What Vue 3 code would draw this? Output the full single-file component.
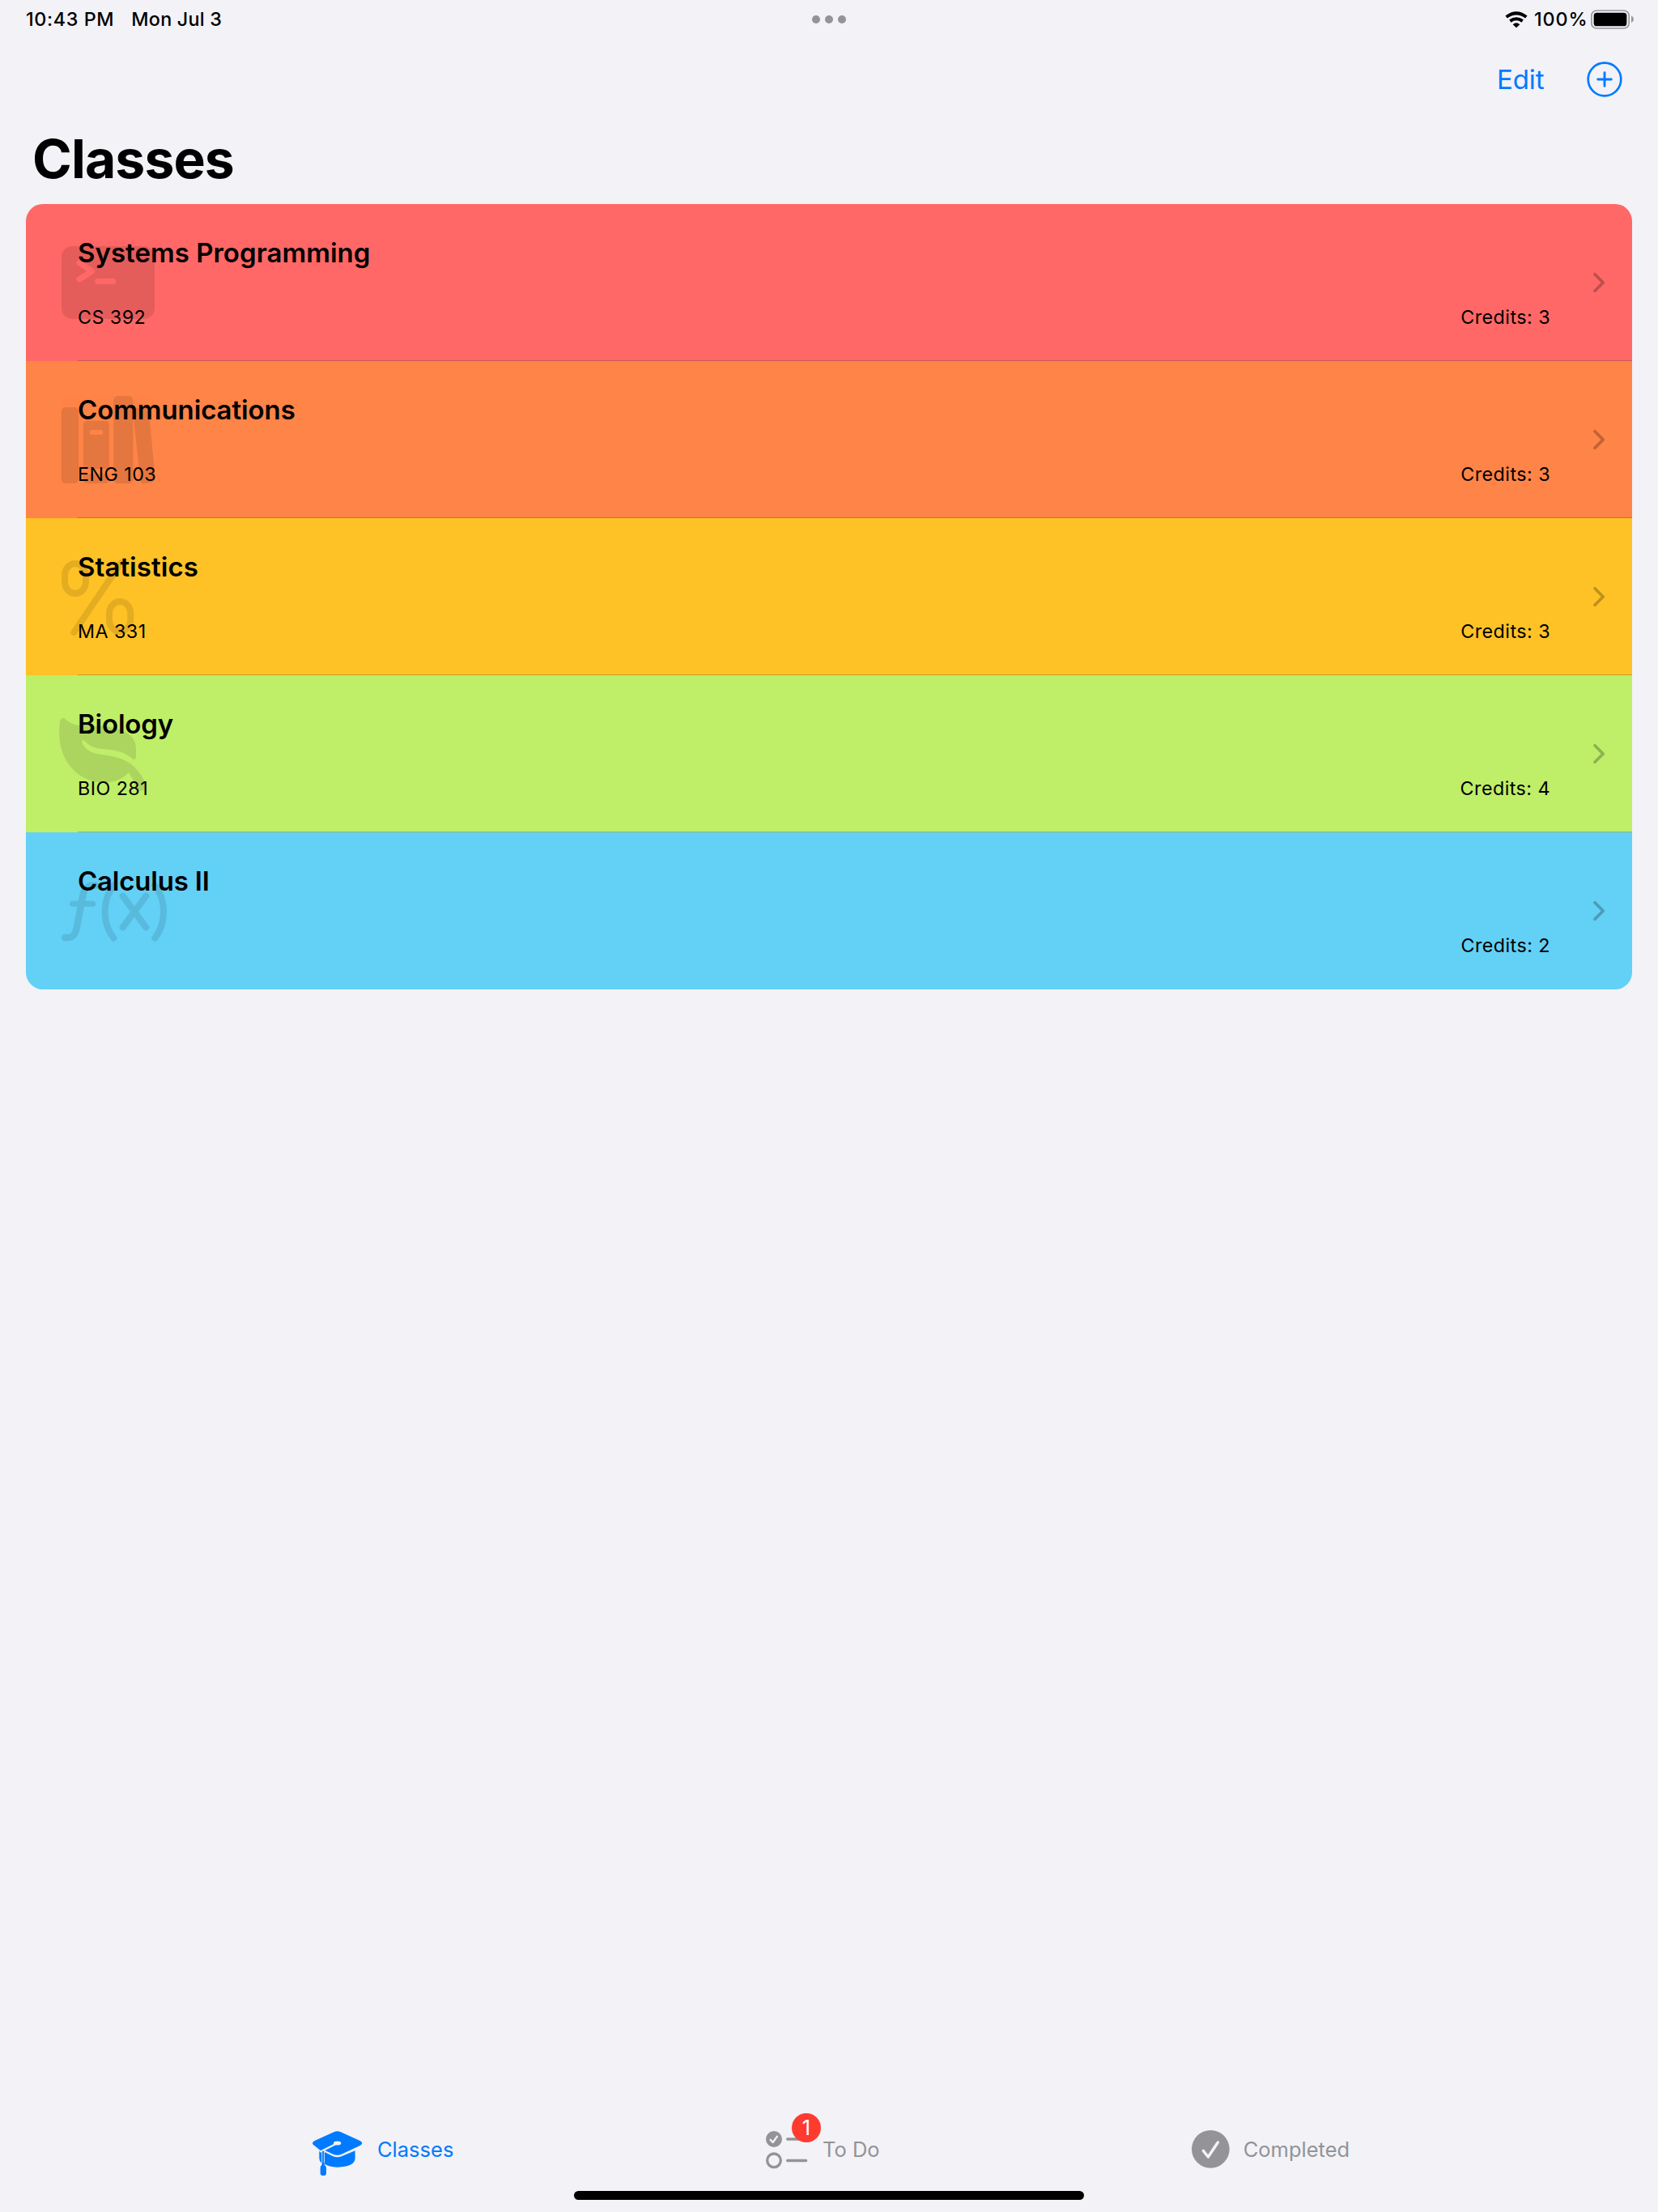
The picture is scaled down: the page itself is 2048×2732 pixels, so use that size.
<script setup>
const classes = [
  { name: 'Systems Programming', code: 'CS 392', credits: 3, color: '#ff6866', icon: 'terminal', box: '36 36 600 582', ls: '0.020px' },
  { name: 'Communications', code: 'ENG 103', credits: 3, color: '#ff8447', icon: 'books', box: '36 18 600 582', ls: '-0.1px' },
  { name: 'Statistics', code: 'MA 331', credits: 3, color: '#ffc226', icon: 'percent', box: '36 0 600 582', ls: '0.060px' },
  { name: 'Biology', code: 'BIO 281', credits: 4, color: '#bfee69', icon: 'leaf', box: '36 12 600 582', ls: '-0.2px' },
  { name: 'Calculus II', code: '', credits: 2, color: '#63d0f6', icon: 'function', box: '36 24 600 582', ls: '-0.2px' }
]
</script>

<template>
  <div class="screen">
    <header class="status">
      <span class="time">10:43 PM</span>
      <span class="date">Mon Jul 3</span>
      <div class="dots"><i></i><i></i><i></i></div>
      <svg class="wifi" viewBox="333 38 84 66">
        <g fill="none" stroke="#000" stroke-width="12">
          <path d="M338 62Q375 34 412 62" />
          <path d="M352 77Q375 61 398 77" />
        </g>
        <path d="M362 90Q375 78 388 90L375 102Z" />
      </svg>
      <span class="percent">100%</span>
      <svg class="battery" viewBox="651 36 162 72">
        <rect x="653.5" y="39" width="139" height="66" rx="19" fill="none" stroke="#98979b" stroke-width="5" />
        <rect x="662" y="47" width="122" height="50" rx="11" />
        <path d="M801 58Q810 63 810 71.500Q810 80 801 85Z" fill="#98979b" />
      </svg>
    </header>

    <nav class="nav">
      <span class="edit">Edit</span>
      <svg class="add" viewBox="0 0 44 44" fill="none" stroke="#007aff" stroke-linecap="round">
        <circle cx="22" cy="22" r="20.300" stroke-width="2.700" />
        <path d="M22 13.700V30.300M13.700 22H30.300" stroke-width="2.900" />
      </svg>
    </nav>

    <h1>Classes</h1>

    <main class="list">
      <section v-for="c in classes" :key="c.name" class="row" :style="{ background: c.color }">
        <svg class="glyph" :viewBox="c.box">
          <template v-if="c.icon === 'terminal'">
            <rect x="168" y="192" width="345" height="270" rx="40" opacity=".1" />
            <path d="M234 254L281 285L234 315M302 322.500H359" fill="none" :stroke="c.color" stroke-width="21" stroke-linecap="round" stroke-linejoin="round" />
          </template>
          <g v-else-if="c.icon === 'books'" opacity=".1">
            <rect x="168" y="189" width="63" height="282" rx="15" />
            <path fill-rule="evenodd" d="M264 239H329Q344 239 344 254V418H249V254Q249 239 264 239ZM281 273A9 9 0 0 0 281 291H313A9 9 0 0 0 313 273Z" />
            <path d="M249 436H344V456Q344 471 329 471H264Q249 471 249 456Z" />
            <rect x="361" y="148" width="72" height="323" rx="15" />
            <path d="M433 206Q433 194 445 192L474 188Q489 187 491 202L515 449Q516 464 502 467L475 472Q462 474 460 460Z" />
          </g>
          <g v-else-if="c.icon === 'percent'" opacity=".1" fill="none" stroke="#000" stroke-width="24" stroke-linecap="round">
            <rect x="180" y="168" width="78" height="111" rx="39" ry="43" />
            <rect x="345" y="309" width="79" height="111" rx="39" ry="43" />
            <path d="M214 423L388 166" />
          </g>
          <g v-else-if="c.icon === 'leaf'" opacity=".1">
            <path d="M162 187C163 171 174 167 184 176C210 199 240 200 300 200C385 200 444 228 444 285V314C443 325 436 327 429 320C400 296 375 289 335 287C290 284 272 276 254 256C247 249 242 255 244 262C257 293 284 302 322 307C370 313 404 322 436 350C452 365 465 383 474 402V436C462 444 450 441 444 429C437 411 428 385 416 373C395 396 365 410 325 410C222 408 151 320 160 205Z" />
          </g>
          <g v-else opacity=".1" fill="none" stroke="#000" stroke-width="24" stroke-linecap="round" stroke-linejoin="round">
            <path d="M180 414H190C212 414 219 401 224 379L247 257C252 232 263 221 285 221H294" stroke-width="25" />
            <path d="M208.500 289H284" stroke-width="21" />
            <path d="M361 220C318 276 318 360 361 416M514 220C557 276 557 360 514 416M395 260L481 376M481 260L395 376" />
          </g>
        </svg>
        <div class="body">
          <div class="title" :style="{ letterSpacing: c.ls }">{{ c.name }}</div>
          <div class="meta"><span>{{ c.code }}</span><span>Credits: {{ c.credits }}</span></div>
        </div>
        <svg class="chevron" viewBox="0 0 16 26"><path d="M3 2.700L13.200 13L3 23.300" /></svg>
      </section>
    </main>

    <footer class="tabs">
      <div class="tab first">
        <svg class="cap" viewBox="78 64 190 200" fill="#007aff">
          <path d="M157 101Q170 94 183 101L254 133Q270 142 254 151L185 183Q170 190 155 183L123 168L118 171H110L86 152Q70 142 86 133Z" />
          <path d="M103 171L112 174V216Q103 208 103 198ZM123 175L153 190Q170 198 187 190L236 170V197Q236 230 170 231Q138 230 123 219Z" />
          <path d="M166 144L106 174" stroke="#f2f2f7" stroke-width="7" />
          <ellipse cx="170" cy="142" rx="14" ry="7.500" fill="#f2f2f7" />
          <path d="M117.500 171V224" stroke="#007aff" stroke-width="6" />
          <path d="M114 213H121L123 224Q129 227 129 234V253Q129 261 121 262H115Q107 261 107 253V234Q107 227 112 224Z" />
        </svg>
        <span>Classes</span>
      </div>
      <div class="tab second">
        <div class="badged">
          <svg class="todo" viewBox="138 119 156 150" fill="none" stroke="#939398" stroke-width="10" stroke-linecap="round" stroke-linejoin="round">
            <circle cx="168" cy="155" r="30" fill="#939398" stroke="none" />
            <path d="M155 157L164 167L180 145" stroke="#f2f2f7" stroke-width="7" />
            <circle cx="168" cy="234" r="25" />
            <path d="M218 155H287M218 234.500H287" />
          </svg>
          <span class="badge">1</span>
        </div>
        <span>To Do</span>
      </div>
      <div class="tab third">
        <svg class="done" viewBox="96 94 140 140">
          <circle cx="166" cy="164" r="70" fill="#939398" />
          <path d="M139 170L157 193L193 139" fill="none" stroke="#f2f2f7" stroke-width="10.500" stroke-linecap="round" stroke-linejoin="round" />
        </svg>
        <span>Completed</span>
      </div>
    </footer>
    <div class="home"></div>
  </div>
</template>

<style>
body { background: #f2f2f7; }
</style>

<style scoped>
.screen { width: 2048px; height: 2732px; display: flex; flex-direction: column; background: #f2f2f7; color: #000; font-family: Inter, "Liberation Sans", sans-serif; overflow: hidden; white-space: nowrap; }
svg { display: block; flex: none; overflow: visible; }
.status { position: relative; display: flex; align-items: center; height: 47px; padding: 0 29px 0 32px; font-size: 23.3px; font-weight: 500; line-height: 47px; }
.time { letter-spacing: 0.65px; }
.date { margin-left: 21px; letter-spacing: 0.25px; }
.dots { position: absolute; left: 50%; top: 24px; transform: translate(-50%, -50%); display: flex; gap: 6px; }
.dots i { width: 10px; height: 10px; border-radius: 50%; background: #939398; }
.wifi { width: 28px; height: 22px; margin-left: auto; }
.percent { width: 66px; margin-left: 8px; letter-spacing: 0.9px; }
.battery { width: 54px; height: 24px; margin-left: 4px; }
.nav { display: flex; justify-content: flex-end; align-items: center; height: 102px; padding-right: 44.500px; }
.edit { width: 110.500px; color: #007aff; font-size: 33px; line-height: 40px; letter-spacing: -0.1px; }
.add { width: 44px; height: 44px; }
h1 { margin: 0 0 9px 40px; height: 94px; font-size: 66px; line-height: 94px; font-weight: 700; letter-spacing: -0.9px; }
.list { margin: 0 32px; border-radius: 21px; overflow: hidden; }
.row { position: relative; display: flex; align-items: center; height: 194px; }
.row:not(:last-child)::after { content: ""; position: absolute; left: 64px; right: 0; bottom: 0; height: 1px; background: rgba(60, 60, 67, .29); }
.glyph { position: absolute; left: 0; top: 0; width: 200px; height: 194px; }
.body { position: relative; flex: 1; display: flex; flex-direction: column; justify-content: space-between; height: 115.500px; margin: 1px 0 0 64px; }
.title { font-size: 33px; line-height: 40px; font-weight: 600; }
.meta { display: flex; justify-content: space-between; height: 30px; font-size: 23.3px; line-height: 30px; letter-spacing: 0.45px; }
.chevron { width: 16px; height: 26px; margin: 0 33px 0 52px; fill: none; stroke: rgba(0, 0, 0, .25); stroke-width: 3.700; stroke-linecap: round; stroke-linejoin: round; }
.tabs { display: flex; align-items: center; height: 80px; margin: auto 0 11.500px; padding-left: 386px; color: #939398; font-size: 25.500px; line-height: 32px; }
.tab { display: flex; align-items: center; }
.first { width: 560px; color: #007aff; }
.second { width: 526px; }
.cap { width: 63.300px; height: 66.700px; margin-right: 16.700px; }
.badged { position: relative; margin-right: 18px; }
.todo { width: 52px; height: 50px; }
.badge { position: absolute; left: 32px; top: -20px; width: 36px; height: 36px; border-radius: 50%; background: #ff3b30; color: #fff; line-height: 36px; text-align: center; }
.done { width: 46.700px; height: 46.700px; margin-right: 17px; }
.home { align-self: center; flex: none; width: 630px; height: 11px; margin-bottom: 15px; border-radius: 6px; background: #000; }
</style>
